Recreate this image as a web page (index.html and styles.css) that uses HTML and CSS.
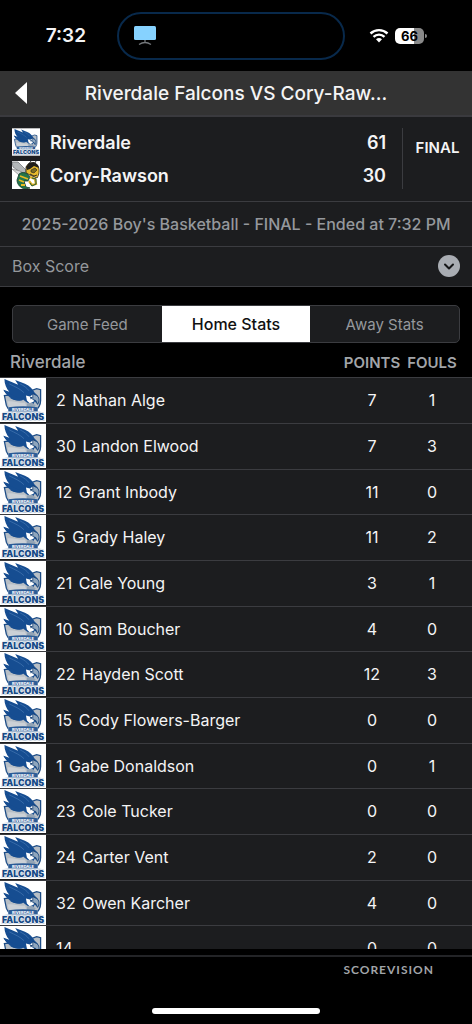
FILE: index.html
```
<!DOCTYPE html>
<html lang="en">
<head>
    <meta charset="UTF-8">
    <meta name="viewport" content="width=device-width, initial-scale=1.0">
    <title>Riverdale Falcons VS Cory-Rawson</title>
    <link rel="stylesheet" href="styles.css">
</head>
<body>
    <!-- team logos, reused below -->
    <svg class="sprite" aria-hidden="true">
        <symbol id="falcons" viewBox="0 0 46 45">
            <rect width="46" height="45" fill="#fff"/>
            <path d="M4 18l2 10c1 3 3 5 5 6h24c4-3 6-6 6-11V12l-4-1-14 5z" fill="#b7bec5" stroke="#1c4c86" stroke-width="1.300"/>
            <path d="M7 24c7-1 11 2 18 1l3 8H12c-3-2-4-5-5-9z" fill="#ccd1d6"/>
            <path d="M4 1l14 6-3-5 10 4c5 2 8 6 10 9l3 3c2 3 2 6 0 9l-3-3-2 4-6-3-4-3c-5 2-10 1-14-2h4c-5-1-8-4-10-8l6 2C6 11 4 6 4 1z" fill="#164d91"/>
            <path d="M3 12l7 4 8 4 6 1-2 2c-7 1-15-3-19-11z" fill="#164d91"/>
            <path d="M9 6c6 3 11 5 15 9M20 6c4 2 7 4 9 7" fill="none" stroke="#4d7fb8" stroke-width=".6"/>
            <path d="M26 18l4 1 3-2 2 3-1 4-4 2-3-3z" fill="#fff"/>
            <path d="M33 16l4 2c3 2 3 6 1 9l-2-4-3-1z" fill="#8fa6bd" stroke="#123e73" stroke-width=".8"/>
            <path d="M30 19l3 1-2 2z" fill="#123e73"/>
            <path d="M27 26l5-1 4 3-2 3h-7z" fill="#92a3b5"/>
            <path d="M8 30h30v4l6 1 1 9H1l1-9 6-1z" fill="#c3d0de"/>
            <path d="M8 30q15-2 30 0v4H8z" fill="#2c5c97"/>
            <text x="23" y="33.500" class="logo-top">RIVERDALE</text>
            <text x="23" y="42.500" class="logo-name">FALCONS</text>
        </symbol>
        <symbol id="hornets" viewBox="0 0 28 28">
            <rect width="28" height="28" fill="#fff"/>
            <path d="M0 1l6 0 8 8-1 3-5-1-7-5z" fill="#b3b7b9" stroke="#6b6f71" stroke-width=".7"/>
            <path d="M0 8l8 2 4 3-5 1z" fill="#d6d9da" stroke="#777" stroke-width=".6"/>
            <path d="M14 6c2-5 9-6 12-1 2 4 1 9-1 12l-5-2-6-3z" fill="#e6b92c" stroke="#252117" stroke-width=".8"/>
            <path d="M14 6l3-4 5-1 4 3 1 3-5-2-4 3-3 1z" fill="#211f1b"/>
            <path d="M19 9l4-2 2 2-3 3-3-1z" fill="#7d6c22" stroke="#222" stroke-width=".6"/>
            <path d="M19 0l-3 4M24 0l-2 4M18 13l4 2 3-1" fill="none" stroke="#222" stroke-width=".9"/>
            <path d="M7 13c4-3 9-1 11 3l-2 4-4 0 2 6 4 1-5 1c-5-1-8-5-8-9z" fill="#24754a" stroke="#153b2a" stroke-width=".8"/>
            <path d="M8 15l8 3M7 19l5 2M9 24l4 0" stroke="#e8ba22" stroke-width="1.800"/>
            <path d="M18 16l5 2 1 5-4 1-3-4" fill="none" stroke="#d7aa1c" stroke-width="2.200"/>
            <path d="M20 17l4 1v5l-4 2-2-3" fill="none" stroke="#225c3c" stroke-width="1"/>
        </symbol>
    </svg>

    <div class="app">
        <div class="status-bar">
            <span class="time">7:32</span>
            <div class="island">
                <svg width="24" height="20" viewBox="0 0 24 20" aria-hidden="true">
                    <path d="M12 14v3M6 18.500q3-2 6-2t6 2" fill="none" stroke="#73777b" stroke-width="1.300"/>
                    <rect x="1" width="22" height="14" rx="1.500" fill="#86d2ff"/>
                </svg>
            </div>
            <div class="signals">
                <svg width="20" height="15" viewBox="0 0 20 15" aria-hidden="true">
                    <path d="M1.500 5.500a12.500 12.500 0 0 1 17 0M4.500 8.800a8 8 0 0 1 11 0" fill="none" stroke="#fff" stroke-width="2.400"/>
                    <path d="M7 11.300q3-2.400 6 0L10 14.500z" fill="#fff"/>
                </svg>
                <span class="battery">66</span>
            </div>
        </div>

        <header class="title-bar">
            <button class="back" aria-label="Back">
                <svg width="12" height="22" viewBox="0 0 12 22"><path d="M12 0v22L0 11z" fill="#fff"/></svg>
            </button>
            <h1>Riverdale Falcons VS Cory-Raw...</h1>
        </header>

        <section class="scoreboard">
            <div class="teams">
                <div class="team">
                    <svg class="team-logo"><use href="#falcons"/></svg>
                    <span class="team-name">Riverdale</span>
                    <span>61</span>
                </div>
                <div class="team">
                    <svg class="team-logo"><use href="#hornets"/></svg>
                    <span class="team-name">Cory-Rawson</span>
                    <span>30</span>
                </div>
            </div>
            <div class="game-state">FINAL</div>
        </section>

        <p class="game-info">2025-2026 Boy's Basketball - FINAL - Ended at 7:32 PM</p>

        <button class="box-score">
            <span>Box Score</span>
            <svg width="22" height="22" viewBox="0 0 22 22" aria-hidden="true">
                <circle cx="11" cy="11" r="11" fill="#a9adb3"/>
                <path d="M7 9.500l4 4 4-4" fill="none" stroke="#151618" stroke-width="2" stroke-linecap="round" stroke-linejoin="round"/>
            </svg>
        </button>

        <nav class="tabs">
            <button>Game Feed</button>
            <button class="active">Home Stats</button>
            <button>Away Stats</button>
        </nav>

        <main class="stats">
            <table>
                <colgroup>
                    <col class="col-logo">
                    <col>
                    <col class="col-num">
                    <col class="col-num">
                    <col class="col-end">
                </colgroup>
                <thead>
                    <tr><th class="team-head" colspan="2">Riverdale</th><th>POINTS</th><th>FOULS</th><th></th></tr>
                </thead>
                <tbody>
                    <tr><td class="logo"><svg><use href="#falcons"/></svg></td><td class="player"><span>2</span> Nathan Alge</td><td>7</td><td>1</td><td></td></tr>
                    <tr><td class="logo"><svg><use href="#falcons"/></svg></td><td class="player"><span>30</span> Landon Elwood</td><td>7</td><td>3</td><td></td></tr>
                    <tr><td class="logo"><svg><use href="#falcons"/></svg></td><td class="player"><span>12</span> Grant Inbody</td><td>11</td><td>0</td><td></td></tr>
                    <tr><td class="logo"><svg><use href="#falcons"/></svg></td><td class="player"><span>5</span> Grady Haley</td><td>11</td><td>2</td><td></td></tr>
                    <tr><td class="logo"><svg><use href="#falcons"/></svg></td><td class="player"><span>21</span> Cale Young</td><td>3</td><td>1</td><td></td></tr>
                    <tr><td class="logo"><svg><use href="#falcons"/></svg></td><td class="player"><span>10</span> Sam Boucher</td><td>4</td><td>0</td><td></td></tr>
                    <tr><td class="logo"><svg><use href="#falcons"/></svg></td><td class="player"><span>22</span> Hayden Scott</td><td>12</td><td>3</td><td></td></tr>
                    <tr><td class="logo"><svg><use href="#falcons"/></svg></td><td class="player"><span>15</span> Cody Flowers-Barger</td><td>0</td><td>0</td><td></td></tr>
                    <tr><td class="logo"><svg><use href="#falcons"/></svg></td><td class="player"><span>1</span> Gabe Donaldson</td><td>0</td><td>1</td><td></td></tr>
                    <tr><td class="logo"><svg><use href="#falcons"/></svg></td><td class="player"><span>23</span> Cole Tucker</td><td>0</td><td>0</td><td></td></tr>
                    <tr><td class="logo"><svg><use href="#falcons"/></svg></td><td class="player"><span>24</span> Carter Vent</td><td>2</td><td>0</td><td></td></tr>
                    <tr><td class="logo"><svg><use href="#falcons"/></svg></td><td class="player"><span>32</span> Owen Karcher</td><td>4</td><td>0</td><td></td></tr>
                    <tr><td class="logo"><svg><use href="#falcons"/></svg></td><td class="player"><span>14</span></td><td>0</td><td>0</td><td></td></tr>
                </tbody>
            </table>
        </main>

        <footer>
            <span class="brand">SCOREVISION</span>
            <div class="home-bar"></div>
        </footer>
    </div>
</body>
</html>
```

FILE: styles.css
```
* {
    box-sizing: border-box;
}
body {
    margin: 0;
    background: #000;
    color: #f4f4f5;
    font-family: Inter, "Liberation Sans", sans-serif;
    font-size: 16px;
}
button {
    font: inherit;
    border: none;
    background: none;
    padding: 0;
    cursor: pointer;
}
.sprite {
    position: absolute;
    width: 0;
    height: 0;
}
.logo-top,
.logo-name {
    text-anchor: middle;
    font-family: Inter, sans-serif;
    font-weight: 800;
}
.logo-top {
    font-size: 4px;
    fill: #fff;
}
.logo-name {
    font-size: 9px;
    font-weight: 900;
    fill: #164a86;
    stroke: #fff;
    stroke-width: 1px;
    paint-order: stroke;
}
.app {
    display: flex;
    flex-direction: column;
    height: 100vh;
    overflow: hidden;
}

/* status bar */
.status-bar {
    display: grid;
    grid-template-columns: 1fr 228px 1fr;
    align-items: center;
    flex: none;
    height: 71px;
    padding-right: 10px;
}
.time {
    justify-self: end;
    padding-right: 31px;
    font-size: 19px;
    font-weight: 600;
}
.island {
    display: flex;
    align-items: center;
    height: 48px;
    padding-left: 14px;
    border: 2px solid #08294b;
    border-radius: 24px;
}
.signals {
    display: flex;
    align-items: center;
    gap: 6px;
    padding-left: 24px;
}
.battery {
    position: relative;
    width: 29px;
    border-radius: 5px;
    background: linear-gradient(90deg, #fff 66%, #8a8a8a 66%);
    color: #000;
    font-size: 13px;
    font-weight: 700;
    line-height: 16px;
    text-align: center;
}
.battery::after {
    content: "";
    position: absolute;
    top: 6px;
    right: -3px;
    width: 2px;
    height: 4px;
    border-radius: 0 2px 2px 0;
    background: #8a8a8a;
}

/* title */
.title-bar {
    display: grid;
    grid-template-columns: 48px 1fr 48px;
    align-items: center;
    flex: none;
    height: 46px;
    background: #333;
    border-bottom: 2px solid #3a3a3e;
}
.back {
    display: flex;
    padding-left: 15px;
}
h1 {
    margin: 0;
    font-size: 19px;
    font-weight: 500;
    text-align: center;
    white-space: nowrap;
}

/* score */
.scoreboard {
    display: flex;
    flex: none;
    height: 85px;
    padding: 11px 0 12px 12px;
    background: #1c1d1f;
    border-bottom: 1px solid #3b3c40;
}
.teams {
    display: flex;
    flex: 1;
    flex-direction: column;
    gap: 5px;
    padding-right: 16px;
    border-right: 1px solid #3b3c40;
}
.team {
    display: flex;
    align-items: center;
    gap: 10px;
    font-size: 18px;
    font-weight: 600;
}
.team-logo {
    width: 28px;
    height: 28px;
}
.team-name {
    flex: 1;
}
.game-state {
    width: 69px;
    padding-top: 10px;
    font-size: 15px;
    font-weight: 600;
    line-height: 20px;
    text-align: center;
}
.game-info {
    flex: none;
    margin: 0;
    background: #1c1d1f;
    border-bottom: 1px solid #3b3c40;
    color: #95989c;
    font-weight: 500;
    line-height: 44px;
    text-align: center;
    white-space: nowrap;
}
.box-score {
    display: flex;
    align-items: center;
    justify-content: space-between;
    flex: none;
    height: 40px;
    padding: 0 12px 1px;
    background: #1c1d1f;
    border-bottom: 1px solid #3b3c40;
    color: #95989c;
}

/* tabs */
.tabs {
    display: grid;
    grid-template-columns: repeat(3, 1fr);
    flex: none;
    height: 38px;
    margin: 18px 12px 0;
    background: #1c1d1f;
    border: 1px solid #3b3c40;
    border-radius: 5px;
    overflow: hidden;
}
.tabs button {
    color: #95989c;
    font-size: 15px;
}
.tabs .active {
    background: #fff;
    color: #111;
    font-size: 16px;
    font-weight: 500;
}

/* player stats */
.stats {
    flex: 1;
    min-height: 0;
    overflow: hidden;
}
table {
    width: 100%;
    table-layout: fixed;
    border-collapse: separate;
    border-spacing: 0;
}
.col-logo {
    width: 56px;
}
.col-num {
    width: 60px;
}
.col-end {
    width: 10px;
}
th {
    height: 34px;
    padding: 5px 0 0;
    color: #a2a5a9;
    font-size: 15px;
    font-weight: 600;
}
.team-head {
    padding: 3px 0 0 10px;
    font-size: 17px;
    font-weight: 500;
    text-align: left;
}
td {
    height: 46px;
    padding: 0 0 1px;
    background: #1c1d1f;
    border-top: 1px solid #3b3c40;
    text-align: center;
}
tr:nth-child(3n) td {
    height: 45px;
}
.player {
    text-align: left;
    white-space: nowrap;
}
.player span {
    margin-right: 2px;
}
.logo {
    padding: 0;
    vertical-align: top;
}
.logo svg {
    display: block;
    width: 46px;
    height: 44px;
    background: #fff;
}

/* footer */
footer {
    display: flex;
    flex-direction: column;
    justify-content: space-between;
    flex: none;
    height: 69px;
    margin-top: 6px;
    padding: 5px 38px 10px;
    border-top: 2px solid #232427;
}
.brand {
    align-self: flex-end;
    color: #a2a5a9;
    font-family: Lato, sans-serif;
    font-size: 12px;
    font-weight: 700;
    letter-spacing: 1px;
}
.home-bar {
    align-self: center;
    width: 168px;
    height: 6px;
    border-radius: 3px;
    background: #fff;
}
```
